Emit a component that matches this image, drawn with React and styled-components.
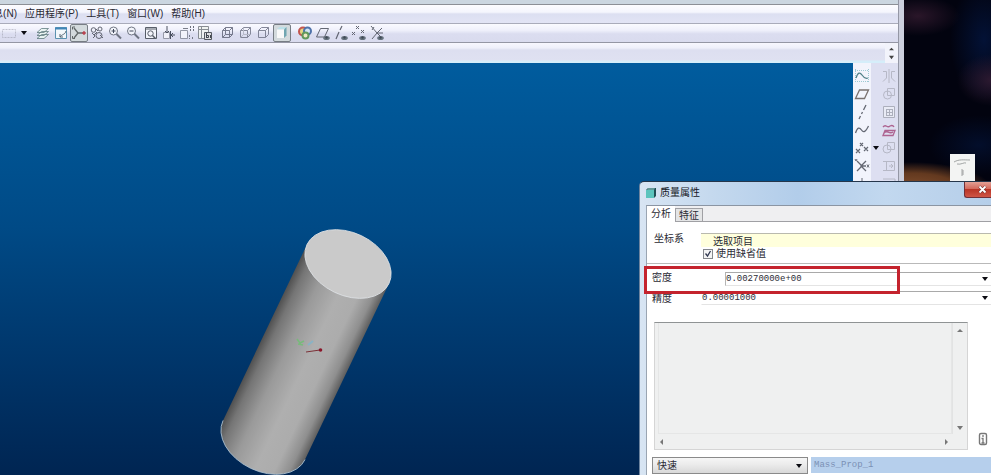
import React, { useState } from 'react';
import styled, { createGlobalStyle } from 'styled-components';

const GlobalStyle = createGlobalStyle`
  * {
    box-sizing: border-box;
  }
  body {
    margin: 0;
    overflow: hidden;
    font-family: "Liberation Sans", "Noto Sans CJK SC", sans-serif;
    font-size: 10px;
    color: #2b2b35;
  }
  button, input, select, textarea {
    font: inherit;
    color: inherit;
    margin: 0;
    padding: 0;
    border: 0;
    border-radius: 0;
    outline: none;
  }
`;

const Desktop = styled.div`
  position: relative;
  display: flex;
  height: 100vh;
  overflow: hidden;
  background-color: #02030f;
`;

const AppWindow = styled.div`
  flex: 1;
  min-width: 0;
  display: flex;
  flex-direction: column;
  padding-right: 1px;
  border-right: 5px solid #cdd0de;
  background-color: #9497a5;
`;

const TitleStrip = styled.div`
  height: 5px;
  flex: none;
  background-color: #cbd6e0;
  border-bottom: 1px solid #8c8f96;
`;

const MenuBar = styled.nav`
  display: flex;
  align-items: center;
  gap: 8px;
  height: 18px;
  flex: none;
  background: linear-gradient(#fcfcff 0%, #f4f5fd 40%, #dcdff1 50%, #e2e4f5 100%);
`;

const MenuItem = styled.button`
  flex: none;
  background: none;
  color: #292933;
  line-height: 16px;
  white-space: nowrap;
`;

// scrolled partly past the left edge of the window
const ClippedMenuItem = styled(MenuItem)`
  display: flex;
  justify-content: flex-end;
  width: 17px;
  overflow: hidden;
`;

const ToolBar = styled.div`
  display: flex;
  align-items: center;
  gap: 5px;
  height: 20px;
  flex: none;
  border-top: 1px solid #a9abba;
  border-bottom: 1px solid #9496a4;
  background: linear-gradient(#fafaff 0%, #eff0fb 35%, #dbddf0 55%, #d9dbee 100%);
`;

const ToolGroup = styled.div`
  display: flex;
  align-items: center;
`;

const ToolButton = styled.button`
  display: flex;
  align-items: center;
  justify-content: center;
  width: 18px;
  height: 18px;
  border: 1px solid ${(props) => (props.$pressed ? '#777d84' : 'transparent')};
  border-radius: 2px;
  background-color: ${(props) => (props.$pressed ? '#d3dadd' : 'transparent')};

  svg {
    opacity: ${(props) => (props.$faint ? 0.45 : 0.85)};
  }
`;

const CaretButton = styled.button`
  display: flex;
  align-items: center;
  justify-content: center;
  width: ${(props) => props.$width || 12}px;
  height: ${(props) => props.$height || 12}px;
  background: none;
`;

const MessageBar = styled.div`
  display: flex;
  justify-content: flex-end;
  height: 20px;
  flex: none;
  background: linear-gradient(#f7f7fe 0%, #eeeffa 25%, #dddff0 35%, #dfe1f1 85%, #d5eefa 90%);
`;

const Spinner = styled.div`
  display: flex;
  flex-direction: column;
  justify-content: center;
  width: 13px;
  background-color: #f2f3fb;
`;

const Workspace = styled.div`
  flex: 1;
  min-height: 0;
  display: flex;
`;

const Viewport = styled.main`
  flex: 1;
  min-width: 0;
  overflow: hidden;
  background: linear-gradient(#005c9e 0%, #004a86 40%, #003468 75%, #002552 100%);
`;

const SideTools = styled.div`
  display: grid;
  grid-template-columns: 18px 9px 18px;
  grid-auto-rows: 18px;
  align-content: start;
  align-items: center;
  padding-top: 4px;
  background: linear-gradient(90deg, #f2f4fc 0 18px, #dddff1 18px 100%);
`;

const Backdrop = styled.aside`
  display: flex;
  flex-direction: column;
  align-items: center;
  width: 87px;
  padding-top: 154px;
  padding-left: 30px;
  background:
    radial-gradient(ellipse 80px 28px at 8px 190px, #84502f 0%, #63391f 60%, transparent 100%),
    radial-gradient(ellipse 34px 26px at 87px 80px, #2c1930 0%, transparent 100%),
    radial-gradient(ellipse 42px 20px at 14px 16px, #2a1629 0%, transparent 100%),
    radial-gradient(ellipse 34px 60px at 80px 40px, #031236 0%, transparent 100%),
    radial-gradient(ellipse 50px 30px at 75px 145px, #030e2b 0%, transparent 100%),
    #02030f;
`;

const Dialog = styled.section`
  position: absolute;
  top: 181px;
  left: 639px;
  right: 0;
  bottom: 0;
  display: flex;
  flex-direction: column;
  padding-left: 6px;
  overflow: hidden;
  border-top: 1px solid #25364b;
  border-left: 1px solid #6b829d;
  border-top-left-radius: 5px;
  background: linear-gradient(90deg, #d8e5f3 0%, #c5d9ee 20%, #b2cdea 45%, #c2d8ef 70%, #b5cee9 100%);
`;

const DialogTitle = styled.header`
  display: flex;
  gap: 4px;
  height: 23px;
  flex: none;

  svg {
    margin-top: 5px;
  }
`;

const DialogName = styled.h1`
  flex: 1;
  margin: 0;
  font-size: 10px;
  font-weight: 400;
  line-height: 22px;
  color: #14181f;
`;

const CloseButton = styled.button`
  display: flex;
  align-items: center;
  justify-content: flex-end;
  width: 27px;
  height: 16px;
  padding-right: 4px;
  border: 1px solid #713038;
  border-top: 0;
  border-right: 0;
  border-bottom-left-radius: 3px;
  background: linear-gradient(#e3a095 0%, #d4695c 45%, #b93526 50%, #cf5546 100%);

  svg {
    margin-top: 0;
  }
`;

const DialogBody = styled.div`
  flex: 1;
  min-height: 0;
  display: flex;
  flex-direction: column;
  border-top: 1px solid #8b95a3;
  border-left: 1px solid #9aa5b2;
  background-color: #fff;
`;

const Tabs = styled.div`
  display: flex;
  align-items: flex-end;
  height: 16px;
  flex: none;
  background-color: #efeff1;
  box-shadow: inset 0 -1px #a0a0a4;
`;

const Tab = styled.button`
  width: 28px;
  height: ${(props) => (props.$active ? 16 : 14)}px;
  line-height: 14px;
  border: 1px solid ${(props) => (props.$active ? '#fff' : '#a0a0a4')};
  background-color: ${(props) => (props.$active ? '#fff' : '#e4e5e6')};
`;

const Reference = styled.div`
  display: grid;
  grid-template-columns: 47px 1fr;
  flex: none;
  padding: 11px 0 2px 7px;
  border-bottom: 1px solid #b9b9b9;
`;

const Label = styled.label`
  line-height: 12px;
  white-space: nowrap;
`;

const PickInput = styled.input`
  width: 100%;
  height: 14px;
  padding-left: 12px;
  border-top: 1px solid #b9b9ae;
  background-color: #ffffdc;
`;

const CheckRow = styled.div`
  grid-column: 2;
  display: flex;
  align-items: center;
  gap: 3px;
  height: 14px;
  padding-left: 2px;
`;

const CheckBox = styled.input`
  appearance: none;
  width: 10px;
  height: 10px;
  border: 1px solid #85888c;
  background: #f4f4f4 url("data:image/svg+xml,%3Csvg xmlns='http://www.w3.org/2000/svg' viewBox='0 0 8 8'%3E%3Cpath d='M1.5 3.5l2 2.5 3-5' fill='none' stroke='%23333a52' stroke-width='1.3'/%3E%3C/svg%3E");
`;

const Values = styled.div`
  display: flex;
  flex-direction: column;
  gap: 5px;
  flex: none;
  padding: 8px 0 17px 5px;
`;

const ValueRow = styled.div`
  display: grid;
  grid-template-columns: ${(props) => (props.$indented ? 73 : 49)}px 1fr;
  align-items: ${(props) => (props.$indented ? 'start' : 'end')};
`;

const Combo = styled.div`
  display: flex;
  align-items: center;
  height: 14px;
  border-top: 1px solid #a9a9a9;
  border-bottom: 1px solid #e4e4e4;
  border-left: 1px solid ${(props) => (props.$boxed ? '#b4b4b4' : 'transparent')};
`;

const ComboInput = styled.input`
  flex: 1;
  min-width: 0;
  height: 12px;
  font-family: "Liberation Mono", monospace;
  font-size: 9px;
  background: none;
`;

const Results = styled.div`
  display: flex;
  align-items: flex-end;
  gap: 10px;
  flex: none;
  padding: 0 3px 7px 7px;
`;

const ResultBox = styled.div`
  flex: 1;
  display: grid;
  grid-template-columns: 1fr 15px;
  grid-template-rows: 111px 15px;
  border: 1px solid #d5d5d5;
  border-top-color: #8f9394;
  background-color: #eff0f0;
`;

const ResultText = styled.textarea`
  resize: none;
  margin: 0 0 0 3px;
  border: 1px solid #e5e6e6;
  border-top: 0;
  background: none;
`;

const ScrollTrack = styled.div`
  display: flex;
  flex-direction: ${(props) => (props.$vertical ? 'column' : 'row')};
  align-items: center;
  justify-content: space-between;
  padding: ${(props) => (props.$vertical ? '2px 0 0' : '0 0 0 1px')};
  border: 0 solid #e2e3e3;
  border-left-width: ${(props) => (props.$vertical ? 1 : 0)}px;
`;

const InfoButton = styled.button`
  display: flex;
  padding-bottom: 3px;
  background: none;
`;

const Footer = styled.div`
  display: flex;
  gap: 3px;
  flex: none;
  padding-left: 5px;
`;

const SelectBox = styled.div`
  display: grid;
  align-items: center;
  justify-items: end;
  width: 156px;
  height: 17px;
  padding-right: 5px;
  border: 1px solid #8a8a8a;
  background: linear-gradient(#f6f6f6 0%, #ebebeb 45%, #d8d8d8 100%);

  svg, select {
    grid-area: 1 / 1;
  }
  svg {
    pointer-events: none;
  }
`;

const SpeedSelect = styled.select`
  appearance: none;
  width: 100%;
  height: 15px;
  padding-left: 4px;
  line-height: 15px;
  background: none;
`;

const NameInput = styled.input`
  flex: 1;
  min-width: 0;
  height: 16px;
  padding-left: 3px;
  font-family: "Liberation Mono", monospace;
  font-size: 9px;
  color: #7b90b5;
  background-color: #b6cfec;
`;

// red frame round the density row
const Highlight = styled.div`
  position: absolute;
  top: 84px;
  left: 4px;
  width: 256px;
  height: 28px;
  border: 3px solid #c4232d;
  pointer-events: none;
`;

const arrows = {
  up: 'M0 4l3-3 3 3z',
  down: 'M0 1h6l-3 4z',
  left: 'M4 0L1 3l3 3z',
  right: 'M2 0l3 3-3 3z',
};

const Arrow = ({ dir = 'down', size = 6, color = '#0c0c12' }) => (
  <svg width={size} height={size} viewBox="0 0 6 6" fill={color} aria-hidden="true">
    <path d={arrows[dir]} />
  </svg>
);

const IconSvg = styled.svg`
  flex: none;
`;

const Icon = ({ children, color = '#4c505c' }) => (
  <IconSvg width="16" height="16" viewBox="0 0 16 16" fill="none" stroke={color} strokeWidth="1" aria-hidden="true">
    {children}
  </IconSvg>
);

const Eye = () => (
  <g stroke="none">
    <ellipse cx="11.5" cy="13" rx="3.3" ry="2" fill="#52606b" />
    <circle cx="11.5" cy="12.5" r="1.2" fill="#24303a" />
  </g>
);

const viewTools = [
  { name: '重画', icon: <Icon color="#4a6b6c"><path d="M2 13.500h7l4.500-4h-7zM2 10.500h7l4.500-4h-7zM2 7.500h7l4.500-4h-7z" fill="#eaf6f2" strokeWidth="0.8" /></Icon> },
  { name: '旋转中心', icon: <Icon color="#4585a5"><path d="M2.500 2.500h11v11h-11z" fill="#f6fbfd" /><path d="M2 3.500h12" stroke="#2374ad" strokeWidth="2" /><path d="M13 6c-1 4-4 3-6 6m0-3v3h3" stroke="#3f5360" /></Icon> },
  { name: '定向模式', pressed: true, icon: <Icon color="#4d5454"><path d="M3 3l4 5h6M7 8l-4 5" strokeWidth="1.3" /><path d="M1.500 4.500V2H4M1.500 11v2.500H4" /><circle cx="13" cy="8" r="1.300" fill="#b52b39" stroke="#b52b39" /></Icon> },
  { name: '外观', icon: <Icon><circle cx="4.500" cy="5" r="2.300" /><circle cx="11" cy="4" r="2" /><circle cx="10" cy="10.500" r="3" /><path d="M3 8l3 3-2 2M7 4l2 2M11 10l3 3M5 10l3-3" /></Icon> },
  { name: '放大', icon: <Icon color="#5c6270"><circle cx="6.500" cy="6" r="4" fill="#f5f7fd" /><path d="M4.500 6h4M6.500 4v4" stroke="#222b3e" /><path d="M9.500 9l4.500 4.500" strokeWidth="2" /></Icon> },
  { name: '缩小', icon: <Icon color="#5c6270"><circle cx="6.500" cy="6" r="4" fill="#f5f7fd" /><path d="M4.500 6h4" stroke="#222b3e" /><path d="M9.500 9l4.500 4.500" strokeWidth="2" /></Icon> },
  { name: '重新调整', icon: <Icon color="#3f4651"><path d="M2.500 2.500h11v11h-11zM2 4h12" fill="#f6f7fd" /><circle cx="7.500" cy="8.500" r="2.700" /><path d="M9.500 10.500l3 3" strokeWidth="1.500" /></Icon> },
  { name: '重定向', icon: <Icon><path d="M2.500 7.500h6v6h-6z" fill="#f4f4fb" stroke="#8b8e9c" /><path d="M6 1v7M4 6l2 2 2-2M9.500 6v8M14 10h-4M12 8l-2 2 2 2" stroke="#303746" /></Icon> },
  { name: '已保存视图', icon: <Icon color="#858997"><path d="M1.500 5.500h7v8h-7z" fill="#f6f6fc" /><path d="M4 3.500h5" stroke="#656975" /><path d="M11.500 1v5M14.500 1v5" stroke="#555965" strokeDasharray="2 1" /><path d="M10.500 10v4M13.500 12v3" stroke="#656975" strokeDasharray="2 1" /></Icon> },
  { name: '层', icon: <Icon color="#787d82"><path d="M1.500 1.500h10v12h-10zM1.500 4.500h10M4.500 1.500v12" fill="#f1f4f0" /><path d="M7.500 7.500h7v7h-7z" fill="#ddd" stroke="#3b4046" /><path d="M9.500 8v5M9.500 10.500h2v2h-2M13.500 10v3" stroke="#262c32" /></Icon> },
];

const cubeFront = <path d="M2.500 5.500h7v7h-7z" />;
const cubeTop = <path d="M2.500 5.500l3-3h7v7l-3 3M9.500 5.500l3-3" />;

const displayTools = [
  { name: '线框', icon: <Icon color="#63677a">{cubeFront}{cubeTop}<path d="M5.500 2.500v7h7M2.500 12.500l3-3" /></Icon> },
  { name: '隐藏线', icon: <Icon color="#74788a">{cubeFront}{cubeTop}<path d="M5.500 3v6.500h7M2.500 12.500l3-3" stroke="#afb2bf" /></Icon> },
  { name: '无隐藏线', icon: <Icon color="#717588">{cubeFront}{cubeTop}</Icon> },
  { name: '着色', pressed: true, icon: <Icon color="#74939c"><path d="M3 4.500l2.500-2.500h7L10 4.500z" fill="#b9e2ea" stroke="none" /><path d="M3 4.500h7V13H3z" fill="#fff" stroke="none" /><path d="M10 4.500L12.500 2v8.500L10 13z" fill="#5f9daa" stroke="none" /></Icon> },
];

const datumTools = [
  { name: '颜色', icon: <Icon><circle cx="6" cy="6.500" r="4" stroke="#bd3c32" strokeWidth="2" fill="#e5d36f" /><circle cx="10.500" cy="6" r="3.500" stroke="#355e9c" strokeWidth="2" fill="#cfe4f4" /><circle cx="8.500" cy="10.500" r="3" stroke="#4c8c42" strokeWidth="2" fill="#f1eab8" /></Icon> },
  { name: '平面显示', icon: <Icon><path d="M5.500 3.500h8l-4 8.500h-8z" /><Eye /></Icon> },
  { name: '轴显示', icon: <Icon><path d="M9 1L7 5M6 7l-3 7" strokeWidth="1.200" /><Eye /></Icon> },
  { name: '点显示', icon: <Icon><path d="M5 1l3 3M8 1L5 4M1 7l3 3M4 7l-3 3M10 5l3 3M13 5l-3 3" /><Eye /></Icon> },
  { name: '坐标系显示', icon: <Icon><path d="M2 1l6 7-5 6M8 8h6M13 3L8 8M3 5l2-3" /><path d="M8 8l5 5" /><Eye /></Icon> },
];

const grey = '#b0b2bf';

const sideTools = [
  { name: '草绘', left: <Icon color="#326c74"><path d="M1 2.500h14M1 13.500h14M1.500 1v14M14.500 1v14" stroke="#8fc3ce" strokeDasharray="1 1" /><path d="M2 10c2-6 4-6 6-3s4 4 6 3" strokeWidth="1.300" /></Icon>, right: '镜像', rightIcon: <Icon color={grey}><path d="M8 1v14M2 3.500h3.500V10L2 13.500M14 3.500h-3.500V10l3.500 3.500" /></Icon> },
  { name: '平面', left: <Icon color="#655b57"><path d="M5.500 4h9l-4 8.500h-9z" strokeWidth="1.300" /></Icon>, right: '合并', rightIcon: <Icon color={grey}><path d="M6.500 2.500h7v7h-7z" /><circle cx="6.500" cy="9" r="4" /></Icon> },
  { name: '轴', left: <Icon><path d="M12 1L9.500 6M8.500 8l-1 2M6.500 12l-1.500 3" strokeWidth="1.300" /></Icon>, right: '阵列', rightIcon: <Icon color="#a4a7b3"><path d="M2.500 2.500h11v11h-11z" fill="#eceef6" /><path d="M5 5.500h7M5 8.500h7M5 11.500h7M5.500 5v7M8.500 5v7M11.500 5v7" /></Icon> },
  { name: '曲线', left: <Icon><path d="M1.500 11c2-6 4-6 6-3s4 2 7-4" strokeWidth="1.300" /></Icon>, right: '投影', rightIcon: <Icon color="#a64f81"><path d="M2 5c3-4 4 2 7-1 2-1 3-1 4 1M2 13.500l2-5h10l-2 5zM3 11c3-4 5 2 9-1" strokeWidth="1.300" /></Icon> },
  { name: '点', caret: true, left: <Icon><path d="M6 3l3 3M9 3L6 6M2 9l4 4M6 9l-4 4M10 7l4 4M14 7l-4 4" strokeWidth="1.200" /></Icon>, right: '修剪', rightIcon: <Icon color={grey}><path d="M6.500 2.500h7v7h-7z" /><circle cx="6" cy="9" r="4" /></Icon> },
  { name: '坐标系', left: <Icon><path d="M3 3l5 5-5 5M12 3L7 8l5 5M7 8h5" strokeWidth="1.300" /><path d="M13 6.500l2 3M15 6.500l-2 3M1 1l1 2 1-2" /></Icon>, right: '延伸', rightIcon: <Icon color={grey}><path d="M2 3.500h11.500v9H2M5.500 3v10M8 8h4M10 6l2 2-2 2" /></Icon> },
  { name: '分析', left: <Icon><path d="M8 2v8M5 8h6" /></Icon>, right: '偏移', rightIcon: <Icon color={grey}><path d="M2 3h12v8H2" /></Icon> },
];

const CylinderScene = () => (
  <svg width="430" height="412" viewBox="0 0 430 412" role="img" aria-label="圆柱体">
    <defs>
      <linearGradient id="side" x1="0" x2="1">
        <stop offset="0" stopColor="#505050" />
        <stop offset="0.1" stopColor="#757575" />
        <stop offset="0.3" stopColor="#9a9a9a" />
        <stop offset="0.55" stopColor="#afafaf" />
        <stop offset="0.75" stopColor="#acacac" />
        <stop offset="0.9" stopColor="#8f8f8f" />
        <stop offset="1" stopColor="#5e5e5e" />
      </linearGradient>
    </defs>
    <g transform="translate(348 201) rotate(25.5)">
      <path d="M-45.400 0V195A45.400 31.300 0 0 0 45.400 195V0z" fill="url(#side)" />
      <path d="M-45.400 195A45.400 31.300 0 0 0 45.400 195" fill="none" stroke="#abc0d0" strokeWidth="0.8" />
      <ellipse rx="45.400" ry="31.300" fill="#cacaca" stroke="#dde1e4" strokeWidth="0.8" />
    </g>
    <path d="M297 276l3 4 4-2M298 281l5 1" fill="none" stroke="#6dc071" strokeWidth="1.500" opacity="0.8" />
    <path d="M308 282l5-4" stroke="#82b5cc" strokeWidth="2" opacity="0.8" />
    <path d="M306 289l14-2" stroke="#7c3138" />
    <circle cx="320.500" cy="287" r="1.800" fill="#8a1529" />
  </svg>
);

const Tools = ({ items }) => (
  <ToolGroup>
    {items.map((tool) => (
      <ToolButton key={tool.name} aria-label={tool.name} $pressed={tool.pressed}>
        {tool.icon}
      </ToolButton>
    ))}
  </ToolGroup>
);

function MassProperties() {
  const [tab, setTab] = useState('分析');
  const [density, setDensity] = useState('0.00270000e+00');
  const [accuracy, setAccuracy] = useState('0.00001000');
  const [useDefault, setUseDefault] = useState(true);

  return (
    <Dialog aria-label="质量属性">
      <DialogTitle>
        <svg width="10" height="12" viewBox="0 0 10 12" aria-hidden="true">
          <path d="M0 3l2-2h8v8l-2 2H0z" fill="#204f55" />
          <path d="M0 3h8v8H0z" fill="#5bc4bd" />
          <path d="M1 2.500l1-1h7l-1 1z" fill="#a7e3dd" />
        </svg>
        <DialogName>质量属性</DialogName>
        <CloseButton aria-label="关闭">
          <svg width="9" height="9" viewBox="0 0 9 9" aria-hidden="true">
            <path d="M1.500 1.500l6 6M7.500 1.500l-6 6" stroke="#6b2b2b" strokeWidth="3" />
            <path d="M1.500 1.500l6 6M7.500 1.500l-6 6" stroke="#fff" strokeWidth="1.800" />
          </svg>
        </CloseButton>
      </DialogTitle>
      <DialogBody>
        <Tabs role="tablist">
          {['分析', '特征'].map((name) => (
            <Tab key={name} role="tab" aria-selected={tab === name} $active={tab === name} onClick={() => setTab(name)}>
              {name}
            </Tab>
          ))}
        </Tabs>
        <Reference>
          <Label htmlFor="csys">坐标系</Label>
          <PickInput id="csys" defaultValue="选取项目" />
          <CheckRow>
            <CheckBox id="default" type="checkbox" checked={useDefault} onChange={(e) => setUseDefault(e.target.checked)} />
            <Label htmlFor="default">使用缺省值</Label>
          </CheckRow>
        </Reference>
        <Values>
          <ValueRow $indented>
            <Label htmlFor="density">密度</Label>
            <Combo $boxed>
              <ComboInput id="density" value={density} onChange={(e) => setDensity(e.target.value)} />
              <CaretButton aria-label="密度列表"><Arrow /></CaretButton>
            </Combo>
          </ValueRow>
          <ValueRow>
            <Label htmlFor="accuracy">精度</Label>
            <Combo>
              <ComboInput id="accuracy" value={accuracy} onChange={(e) => setAccuracy(e.target.value)} />
              <CaretButton aria-label="精度列表"><Arrow /></CaretButton>
            </Combo>
          </ValueRow>
        </Values>
        <Results>
          <ResultBox>
            <ResultText aria-label="结果" readOnly />
            <ScrollTrack $vertical>
              <CaretButton aria-label="向上"><Arrow dir="up" color="#777" /></CaretButton>
              <CaretButton aria-label="向下"><Arrow color="#777" /></CaretButton>
            </ScrollTrack>
            <ScrollTrack>
              <CaretButton aria-label="向左"><Arrow dir="left" color="#777" /></CaretButton>
              <CaretButton aria-label="向右"><Arrow dir="right" color="#777" /></CaretButton>
            </ScrollTrack>
          </ResultBox>
          <InfoButton aria-label="信息">
            <svg width="10" height="16" viewBox="0 0 10 16" fill="none" stroke="#777" aria-hidden="true">
              <rect x="1.500" y="2.500" width="7" height="11" rx="1.500" strokeWidth="1.400" />
              <path d="M5 4v2M3.500 7.500H5V12M3.500 12h3" strokeWidth="1.300" />
            </svg>
          </InfoButton>
        </Results>
        <Footer>
          <SelectBox>
            <SpeedSelect aria-label="类型">
              <option>快速</option>
              <option>已保存</option>
            </SpeedSelect>
            <Arrow />
          </SelectBox>
          <NameInput aria-label="名称" defaultValue="Mass_Prop_1" />
        </Footer>
      </DialogBody>
      <Highlight />
    </Dialog>
  );
}

function App() {
  return (
    <>
      <GlobalStyle />
      <Desktop>
        <AppWindow>
          <TitleStrip />
          <MenuBar>
            <ClippedMenuItem>息(N)</ClippedMenuItem>
            {['应用程序(P)', '工具(T)', '窗口(W)', '帮助(H)'].map((item) => (
              <MenuItem key={item}>{item}</MenuItem>
            ))}
          </MenuBar>
          <ToolBar>
            <ToolGroup>
              <ToolButton aria-label="选取" $faint>
                <Icon color="#8d8f9d"><path d="M1.500 4.500h13v8h-13z" strokeDasharray="2 1" /></Icon>
              </ToolButton>
              <CaretButton $width={11} aria-label="选取选项"><Arrow /></CaretButton>
            </ToolGroup>
            <Tools items={viewTools} />
            <Tools items={displayTools} />
            <Tools items={datumTools} />
          </ToolBar>
          <MessageBar>
            <Spinner>
              <CaretButton $height={8} aria-label="上一条"><Arrow dir="up" size={5} color="#444" /></CaretButton>
              <CaretButton $height={8} aria-label="下一条"><Arrow size={5} color="#444" /></CaretButton>
            </Spinner>
          </MessageBar>
          <Workspace>
            <Viewport>
              <CylinderScene />
            </Viewport>
            <SideTools>
              {sideTools.map((row) => (
                <React.Fragment key={row.name}>
                  <ToolButton aria-label={row.name}>{row.left}</ToolButton>
                  {row.caret ? <CaretButton $width={9} aria-label="更多点"><Arrow /></CaretButton> : <span />}
                  <ToolButton aria-label={row.right}>{row.rightIcon}</ToolButton>
                </React.Fragment>
              ))}
            </SideTools>
          </Workspace>
        </AppWindow>
        <Backdrop>
          <svg width="25" height="28" viewBox="0 0 25 28" aria-hidden="true">
            <path d="M0 0h25v28H0z" fill="#f3f4f3" />
            <path d="M4 8c5-3 10-2 16-2M7 10c4 1 7-2 9-1M12 15v7M13 16v5" fill="none" stroke="#8d9090" strokeWidth="0.8" />
          </svg>
        </Backdrop>
        <MassProperties />
      </Desktop>
    </>
  );
}

export default App;
